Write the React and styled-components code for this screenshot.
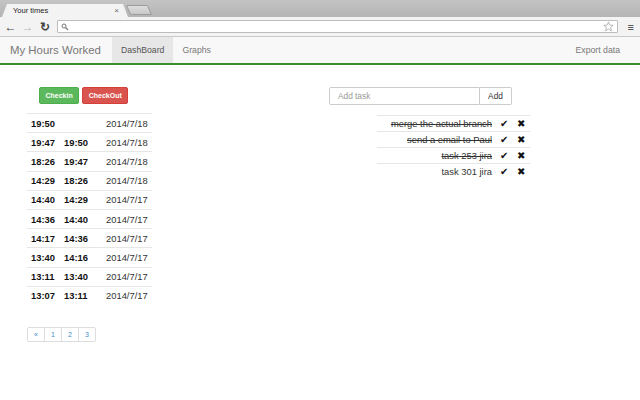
import React from "react";
import styled, { createGlobalStyle } from "styled-components";

const GlobalStyle = createGlobalStyle`
  html, body {
    margin: 0;
    padding: 0;
    background: #ffffff;
    font-family: "Liberation Sans", Arial, sans-serif;
  }
`;

const Page = styled.div`
  width: 640px;
  height: 400px;
  overflow: hidden;
  display: flex;
  flex-direction: column;
  background: #ffffff;
`;

/* browser chrome */
const TabStrip = styled.div`
  height: 17px;
  display: flex;
  align-items: flex-end;
  padding-left: 2px;
  background: linear-gradient(#c4c4c4, #b4b4b4);
`;

const Tab = styled.div`
  width: 126px;
  height: 13px;
  background: #f3f3f3;
  clip-path: polygon(0 100%, 5px 0, 121px 0, 100% 100%);
  display: flex;
  align-items: center;
  justify-content: space-between;
  padding: 0 9px 0 11px;
  box-sizing: border-box;
  font-size: 7.5px;
  color: #222;
`;

const TabClose = styled.span`
  font-size: 8px;
  color: #666;
`;

const NewTab = styled.div`
  width: 20px;
  height: 8px;
  margin: 0 0 2px 0;
  background: linear-gradient(#dedede, #c8c8c8);
  border: 1px solid #9c9c9c;
  border-radius: 2px;
  transform: skewX(25deg);
`;

const Toolbar = styled.div`
  height: 19px;
  display: flex;
  align-items: center;
  padding: 0 6px 0 2px;
  background: #f3f3f3;
  border-bottom: 1px solid #c9c9c9;
`;

const NavIcon = styled.span`
  width: 17px;
  display: flex;
  justify-content: center;
  color: ${(p) => (p.$dim ? "#b8b8b8" : "#444")};
  font-size: 12px;
  font-weight: bold;
`;

const AddressBar = styled.div`
  flex: 1;
  height: 13px;
  margin-left: 4px;
  background: #fff;
  border: 1px solid #bdbdbd;
  border-radius: 1px;
  display: flex;
  align-items: center;
  justify-content: space-between;
  padding: 0 3px;
  box-sizing: border-box;
`;

const MenuIcon = styled.span`
  width: 16px;
  text-align: right;
  font-size: 11px;
  font-weight: bold;
  color: #333;
`;

/* app navbar */
const Navbar = styled.div`
  height: 26px;
  display: flex;
  align-items: stretch;
  background: #f8f8f8;
  border-bottom: 2px solid #3f8d33;
  padding: 0 10px;
`;

const Brand = styled.div`
  display: flex;
  align-items: center;
  font-size: 11.4px;
  color: #777;
  margin-right: 11px;
`;

const NavLink = styled.div`
  display: flex;
  align-items: center;
  padding: 0 9px;
  font-size: 8.7px;
  color: ${(p) => (p.$active ? "#555" : "#777")};
  background: ${(p) => (p.$active ? "#e7e7e7" : "transparent")};
  margin-left: ${(p) => (p.$right ? "auto" : "0")};
  padding-right: ${(p) => (p.$right ? "10px" : "9px")};
`;

/* content */
const Content = styled.div`
  display: flex;
  padding: 22px 0 0 27px;
`;

const LeftCol = styled.div`
  width: 125px;
`;

const RightCol = styled.div`
  margin-left: 177px;
  width: 201px;
  display: flex;
  flex-direction: column;
`;

const ButtonRow = styled.div`
  display: flex;
  gap: 3px;
  padding-left: 12px;
  margin-bottom: 9px;
`;

const Button = styled.div`
  height: 15px;
  padding: 0 5.5px;
  display: flex;
  align-items: center;
  font-size: 7px;
  font-weight: bold;
  color: #fff;
  border-radius: 2px;
  background: ${(p) => p.$bg};
  border: 1px solid ${(p) => p.$border};
`;

const Table = styled.div`
  display: flex;
  flex-direction: column;
`;

const Row = styled.div`
  height: 19.2px;
  display: grid;
  grid-template-columns: 33px 42px 1fr;
  align-items: center;
  padding-left: 4px;
  border-top: 1px solid #e6e6e6;
  box-sizing: border-box;
  font-size: 9.4px;
  color: #333;
`;

const Time = styled.span`
  font-weight: bold;
  color: #111;
`;

const Pager = styled.div`
  display: flex;
  margin-top: 22px;
`;

const PageItem = styled.div`
  width: 18px;
  height: 15px;
  box-sizing: border-box;
  border: 1px solid #ddd;
  margin-left: -1px;
  display: flex;
  align-items: center;
  justify-content: center;
  font-size: 7px;
  color: #428bca;
  &:first-child {
    margin-left: 0;
    border-radius: 2px 0 0 2px;
  }
  &:last-child {
    border-radius: 0 2px 2px 0;
  }
`;

const InputGroup = styled.div`
  display: flex;
  width: 183px;
  height: 18px;
`;

const TaskInput = styled.div`
  flex: 1;
  border: 1px solid #ccc;
  border-radius: 2px 0 0 2px;
  display: flex;
  align-items: center;
  padding-left: 8px;
  font-size: 8.3px;
  color: #999;
`;

const AddButton = styled.div`
  width: 31px;
  border: 1px solid #ccc;
  border-left: none;
  border-radius: 0 2px 2px 0;
  display: flex;
  align-items: center;
  justify-content: center;
  font-size: 8.3px;
  color: #333;
`;

const TaskList = styled.div`
  margin: 10px 0 0 48px;
  width: 153px;
`;

const TaskRow = styled.div`
  height: 16px;
  display: flex;
  align-items: center;
  justify-content: flex-end;
  border-top: 1px solid #e6e6e6;
  box-sizing: border-box;
  font-size: 9.4px;
  color: #333;
  padding-right: 4px;
`;

const TaskText = styled.span`
  text-decoration: ${(p) => (p.$done ? "line-through" : "none")};
  margin-right: 7px;
`;

const TaskIcon = styled.span`
  width: 10px;
  margin-left: ${(p) => p.$gap || 0}px;
  display: flex;
  justify-content: center;
  font-size: 10px;
  color: #111;
`;

const times = [
  ["19:50", "", "2014/7/18"],
  ["19:47", "19:50", "2014/7/18"],
  ["18:26", "19:47", "2014/7/18"],
  ["14:29", "18:26", "2014/7/18"],
  ["14:40", "14:29", "2014/7/17"],
  ["14:36", "14:40", "2014/7/17"],
  ["14:17", "14:36", "2014/7/17"],
  ["13:40", "14:16", "2014/7/17"],
  ["13:11", "13:40", "2014/7/17"],
  ["13:07", "13:11", "2014/7/17"],
];

const tasks = [
  { text: "merge the actual branch", done: true },
  { text: "send a email to Paul", done: true },
  { text: "task 253 jira", done: true },
  { text: "task 301 jira", done: false },
];

const Search = () => (
  <svg width="8" height="8" viewBox="0 0 8 8">
    <circle cx="3" cy="3" r="2" fill="none" stroke="#777" strokeWidth="1" />
    <line x1="4.5" y1="4.5" x2="7" y2="7" stroke="#777" strokeWidth="1.2" />
  </svg>
);

const Star = () => (
  <svg width="11" height="11" viewBox="0 0 24 24">
    <polygon
      points="12,2 15,9 22,9.5 16.5,14 18.5,21.5 12,17.5 5.5,21.5 7.5,14 2,9.5 9,9"
      fill="none"
      stroke="#999"
      strokeWidth="1.5"
    />
  </svg>
);

export default function App() {
  return (
    <Page>
      <GlobalStyle />
      <TabStrip>
        <Tab>
          <span>Your times</span>
          <TabClose>×</TabClose>
        </Tab>
        <NewTab />
      </TabStrip>
      <Toolbar>
        <NavIcon>←</NavIcon>
        <NavIcon $dim>→</NavIcon>
        <NavIcon>↻</NavIcon>
        <AddressBar>
          <Search />
          <Star />
        </AddressBar>
        <MenuIcon>≡</MenuIcon>
      </Toolbar>
      <Navbar>
        <Brand>My Hours Worked</Brand>
        <NavLink $active>DashBoard</NavLink>
        <NavLink>Graphs</NavLink>
        <NavLink $right>Export data</NavLink>
      </Navbar>
      <Content>
        <LeftCol>
          <ButtonRow>
            <Button $bg="#5cb85c" $border="#4cae4c">Checkin</Button>
            <Button $bg="#d9534f" $border="#d43f3a">CheckOut</Button>
          </ButtonRow>
          <Table>
            {times.map((t, i) => (
              <Row key={i}>
                <Time>{t[0]}</Time>
                <Time>{t[1]}</Time>
                <span>{t[2]}</span>
              </Row>
            ))}
          </Table>
          <Pager>
            <PageItem>«</PageItem>
            <PageItem>1</PageItem>
            <PageItem>2</PageItem>
            <PageItem>3</PageItem>
          </Pager>
        </LeftCol>
        <RightCol>
          <InputGroup>
            <TaskInput>Add task</TaskInput>
            <AddButton>Add</AddButton>
          </InputGroup>
          <TaskList>
            {tasks.map((t, i) => (
              <TaskRow key={i}>
                <TaskText $done={t.done}>{t.text}</TaskText>
                <TaskIcon>✔</TaskIcon>
                <TaskIcon $gap={7}>✖</TaskIcon>
              </TaskRow>
            ))}
          </TaskList>
        </RightCol>
      </Content>
    </Page>
  );
}
